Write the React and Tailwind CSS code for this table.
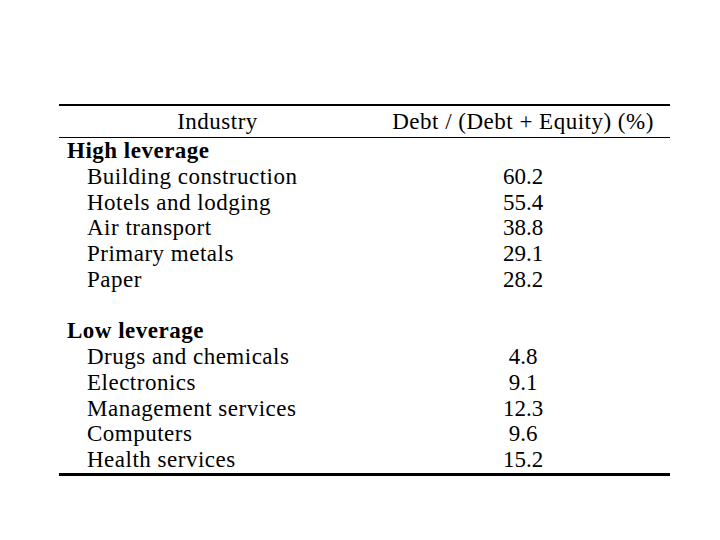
import React from "react";

const high = [
  ["Building construction", "60.2"],
  ["Hotels and lodging", "55.4"],
  ["Air transport", "38.8"],
  ["Primary metals", "29.1"],
  ["Paper", "28.2"],
];

const low = [
  ["Drugs and chemicals", "4.8"],
  ["Electronics", "9.1"],
  ["Management services", "12.3"],
  ["Computers", "9.6"],
  ["Health services", "15.2"],
];

function Row({ name, value }) {
  return (
    <div className="flex h-[25.8px] leading-[25.6px]">
      <div className="w-[317px] pl-[28px] tracking-[0.5px]">{name}</div>
      <div className="flex-1 text-center">{value}</div>
    </div>
  );
}

function Group({ title }) {
  return (
    <div className="h-[25.8px] leading-[25.6px] pl-[8px] font-bold tracking-[0.5px]">
      {title}
    </div>
  );
}

export default function App() {
  return (
    <div className="w-[720px] h-[540px] bg-white text-black pt-[104px] pl-[59px] font-[family-name:Liberation_Serif,Times_New_Roman,serif] text-[23px]">
      <div className="w-[611px] border-t-2 border-b-[3px] border-black">
        {/* header */}
        <div className="flex h-[32px] pt-[3px] leading-[25.6px] border-b border-black tracking-[0.5px]">
          <div className="w-[317px] text-center">Industry</div>
          <div className="flex-1 text-center">Debt / (Debt + Equity) (%)</div>
        </div>
        <div>
          <Group title="High leverage" />
          {high.map(([n, v]) => (
            <Row key={n} name={n} value={v} />
          ))}
          <div className="h-[25.4px]" />
          <Group title="Low leverage" />
          {low.map(([n, v]) => (
            <Row key={n} name={n} value={v} />
          ))}
        </div>
      </div>
    </div>
  );
}
